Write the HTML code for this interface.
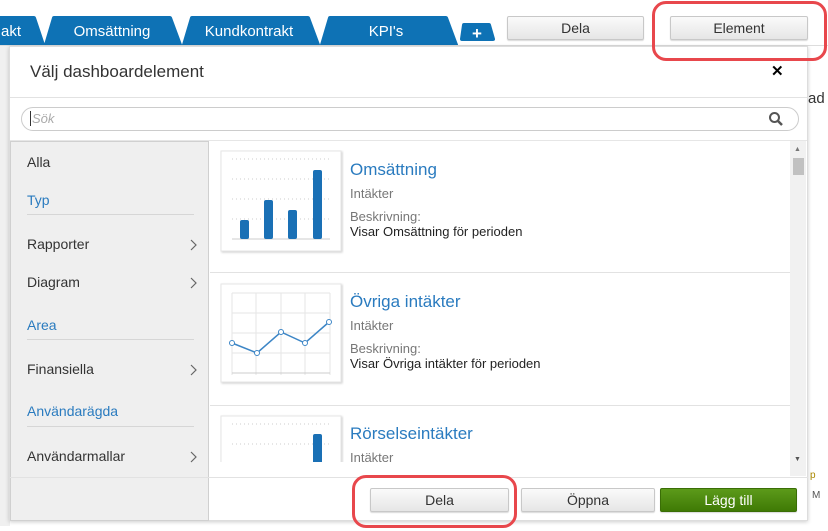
<!DOCTYPE html>
<html><head><meta charset="utf-8"><style>
*{box-sizing:border-box;margin:0;padding:0}
body{width:828px;height:531px;overflow:hidden;background:#fff;font-family:"Liberation Sans",sans-serif;position:relative;color:#333}
.abs{position:absolute}
.btn{position:absolute;border:1px solid #c8c8c8;border-radius:2px;background:linear-gradient(#fafafa,#e6e6e6);font-size:14px;color:#333;text-align:center;box-shadow:0 1px 1px rgba(0,0,0,.15)}
.red{position:absolute;border:3px solid #e8474c;border-radius:14px}
.side div{position:absolute;left:16px;font-size:14px;color:#333}
.side .h{color:#2a7bbf}
.side .ln{position:absolute;left:16px;width:167px;height:1px;background:#d6d6d6}
.chev{position:absolute;left:179px}
.item .t{position:absolute;left:350px;font-size:17px;color:#2a7bbf}
.item .s{position:absolute;left:350px;font-size:13px;color:#777}
.item .d{position:absolute;left:350px;font-size:13px;color:#222}
</style></head><body>
<svg class="abs" style="left:0;top:0" width="828" height="60">
<g fill="#0e72b5" stroke="#0e72b5" stroke-width="4" stroke-linejoin="round">
<polygon points="-10,45 -2,18 34,18 43,45"/>
<polygon points="46,45 54,18 170,18 180,45"/>
<polygon points="184,45 192,18 308,18 318,45"/>
<polygon points="322,45 330,18 446,18 456,45"/>
<polygon points="462,39 464,25 489,25 493,39"/>
</g>
<rect x="0" y="45" width="828" height="1" fill="#ddd"/>
<text x="11" y="36" fill="#fff" font-size="15" font-family="Liberation Sans" text-anchor="middle">akt</text>
<text x="112" y="36" fill="#fff" font-size="15" font-family="Liberation Sans" text-anchor="middle">Omsättning</text>
<text x="249" y="36" fill="#fff" font-size="15" font-family="Liberation Sans" text-anchor="middle">Kundkontrakt</text>
<text x="386" y="36" fill="#fff" font-size="15" font-family="Liberation Sans" text-anchor="middle">KPI's</text>
<text x="477" y="39" fill="#fff" font-size="17" font-weight="bold" font-family="Liberation Sans" text-anchor="middle">+</text>
</svg>
<div class="btn" style="left:507px;top:16px;width:137px;height:24px;line-height:22px">Dela</div>
<div class="btn" style="left:670px;top:16px;width:138px;height:24px;line-height:22px">Element</div>
<div class="abs" style="left:808px;top:90px;font-size:15px;color:#333">ad</div>
<div class="abs" style="left:810px;top:470px;font-size:10px;color:#a80">p</div>
<div class="abs" style="left:812px;top:490px;font-size:10px;color:#555">M</div>
<div class="abs" style="left:0;top:46px;width:10px;height:480px;background:#f0f0f0"></div>
<!-- dialog -->
<div class="abs" style="left:9px;top:46px;width:799px;height:475px;background:#fff;border:1px solid #ddd;box-shadow:0 1px 4px rgba(0,0,0,.2)">
 <div class="abs" style="left:20px;top:15px;font-size:17px;color:#333">Välj dashboardelement</div>
 <div class="abs" style="left:761px;top:15px;font-size:15px;font-weight:bold;color:#000">✕</div>
 <div class="abs" style="left:0;top:50px;width:797px;height:1px;background:#e2e2e2"></div>
 <div class="abs" style="left:11px;top:60px;width:778px;height:24px;border:1px solid #ccc;border-radius:12px"></div>
 <div class="abs" style="left:20px;top:64px;font-size:13px;color:#aaa;font-style:italic;border-left:1px solid #333;padding-left:1px">Sök</div>
 <svg class="abs" style="left:758px;top:64px" width="16" height="16"><circle cx="6.5" cy="6.5" r="4.5" fill="none" stroke="#555" stroke-width="2"/><line x1="10" y1="10" x2="14" y2="14" stroke="#555" stroke-width="2.5"/></svg>
 <div class="abs" style="left:0;top:93px;width:797px;height:1px;background:#e6e6e6"></div>
</div>
<!-- sidebar -->
<div class="abs side" style="left:10px;top:141px;width:199px;height:380px;background:#efefef;border:1px solid #d0d0d0">
 <div style="top:12px">Alla</div>
 <div class="h" style="top:50px">Typ</div><span class="ln" style="top:72px"></span>
 <div style="top:94px">Rapporter</div><svg class="chev" style="top:97px" width="8" height="12"><polyline points="1,1 6,6 1,11" fill="none" stroke="#666" stroke-width="1.2"/></svg>
 <div style="top:132px">Diagram</div><svg class="chev" style="top:135px" width="8" height="12"><polyline points="1,1 6,6 1,11" fill="none" stroke="#666" stroke-width="1.2"/></svg>
 <div class="h" style="top:175px">Area</div><span class="ln" style="top:197px"></span>
 <div style="top:219px">Finansiella</div><svg class="chev" style="top:222px" width="8" height="12"><polyline points="1,1 6,6 1,11" fill="none" stroke="#666" stroke-width="1.2"/></svg>
 <div class="h" style="top:261px">Användarägda</div><span class="ln" style="top:284px"></span>
 <div style="top:306px">Användarmallar</div><svg class="chev" style="top:309px" width="8" height="12"><polyline points="1,1 6,6 1,11" fill="none" stroke="#666" stroke-width="1.2"/></svg>
</div>
<!-- list -->
<div class="abs item" style="left:0;top:0;width:828px;height:531px;pointer-events:none">
 <div class="abs" style="left:790px;top:141px;width:16px;height:335px;background:#f1f1f1"></div>
 <div class="abs" style="left:793px;top:158px;width:11px;height:17px;background:#c1c1c1"></div>
 <div class="abs" style="left:794px;top:146px;font-size:7px;color:#777">▲</div>
 <div class="abs" style="left:794px;top:456px;font-size:7px;color:#555">▼</div>
 <div class="abs" style="left:210px;top:272px;width:580px;height:1px;background:#e2e2e2"></div>
 <div class="abs" style="left:210px;top:405px;width:580px;height:1px;background:#e2e2e2"></div>
 <div class="abs" style="left:10px;top:477px;width:798px;height:1px;background:#e2e2e2"></div>
 <svg class="abs" style="left:220px;top:150px" width="124" height="327">
  <defs><filter id="sh" x="-5%" y="-5%" width="115%" height="115%"><feDropShadow dx="1" dy="1" stdDeviation="1" flood-opacity="0.2"/></filter></defs>
  <g>
  <rect x="1" y="1" width="120" height="100" fill="#fff" stroke="#e6e6e6" filter="url(#sh)"/>
  <g stroke="#ccc" stroke-dasharray="1,3"><line x1="12" y1="9" x2="110" y2="9"/><line x1="12" y1="29" x2="110" y2="29"/><line x1="12" y1="49" x2="110" y2="49"/><line x1="12" y1="69" x2="110" y2="69"/></g>
  <line x1="12" y1="89" x2="110" y2="89" stroke="#ccc"/>
  <g fill="#1a70b5"><rect x="20" y="70" width="9" height="19" rx="2"/><rect x="44" y="50" width="9" height="39" rx="2"/><rect x="68" y="60" width="9" height="29" rx="2"/><rect x="93" y="20" width="9" height="69" rx="2"/></g>
  </g>
  <g transform="translate(0,133)">
  <rect x="1" y="1" width="120" height="98" fill="#fff" stroke="#e6e6e6" filter="url(#sh)"/>
  <g stroke="#e6e6e6"><line x1="12" y1="10" x2="12" y2="92"/><line x1="36" y1="10" x2="36" y2="92"/><line x1="61" y1="10" x2="61" y2="92"/><line x1="85" y1="10" x2="85" y2="92"/><line x1="110" y1="10" x2="110" y2="92"/><line x1="12" y1="10" x2="110" y2="10"/><line x1="12" y1="30" x2="110" y2="30"/><line x1="12" y1="50" x2="110" y2="50"/><line x1="12" y1="70" x2="110" y2="70"/></g>
  <line x1="12" y1="90" x2="110" y2="90" stroke="#ccc"/>
  <polyline points="12,60 37,70 61,49 85,60 109,39" fill="none" stroke="#3d86c6" stroke-width="1.5"/>
  <g fill="#fff" stroke="#3d86c6"><circle cx="12" cy="60" r="2.5"/><circle cx="37" cy="70" r="2.5"/><circle cx="61" cy="49" r="2.5"/><circle cx="85" cy="60" r="2.5"/><circle cx="109" cy="39" r="2.5"/></g>
  </g>
  <g transform="translate(0,265)">
  <rect x="1" y="1" width="120" height="70" fill="#fff" stroke="#e6e6e6" filter="url(#sh)"/>
  <g stroke="#ccc" stroke-dasharray="1,3"><line x1="12" y1="9" x2="110" y2="9"/><line x1="12" y1="29" x2="110" y2="29"/><line x1="12" y1="49" x2="110" y2="49"/></g>
  <g fill="#1a70b5"><rect x="44" y="49" width="9" height="13"/><rect x="93" y="19" width="9" height="43" rx="2"/></g>
  </g>
 </svg>
 <div class="abs" style="left:210px;top:462px;width:580px;height:15px;background:#fff"></div>
 <div class="t" style="top:160px">Omsättning</div>
 <div class="s" style="top:186px">Intäkter</div>
 <div class="s" style="top:209px">Beskrivning:</div>
 <div class="d" style="top:224px">Visar Omsättning för perioden</div>
 <div class="t" style="top:292px">Övriga intäkter</div>
 <div class="s" style="top:318px">Intäkter</div>
 <div class="s" style="top:341px">Beskrivning:</div>
 <div class="d" style="top:356px">Visar Övriga intäkter för perioden</div>
 <div class="t" style="top:424px">Rörselseintäkter</div>
 <div class="s" style="top:450px">Intäkter</div>
</div>
<div class="btn" style="left:370px;top:488px;width:139px;height:24px;line-height:22px">Dela</div>
<div class="btn" style="left:521px;top:488px;width:134px;height:24px;line-height:22px">Öppna</div>
<div class="btn" style="left:660px;top:488px;width:137px;height:24px;line-height:22px;background:linear-gradient(#5c9a1a,#3f7a05);border-color:#3a6e06;color:#fff">Lägg till</div>
<div class="red" style="left:652px;top:1px;width:175px;height:60px"></div>
<div class="red" style="left:352px;top:475px;width:165px;height:53px"></div>
</body></html>
